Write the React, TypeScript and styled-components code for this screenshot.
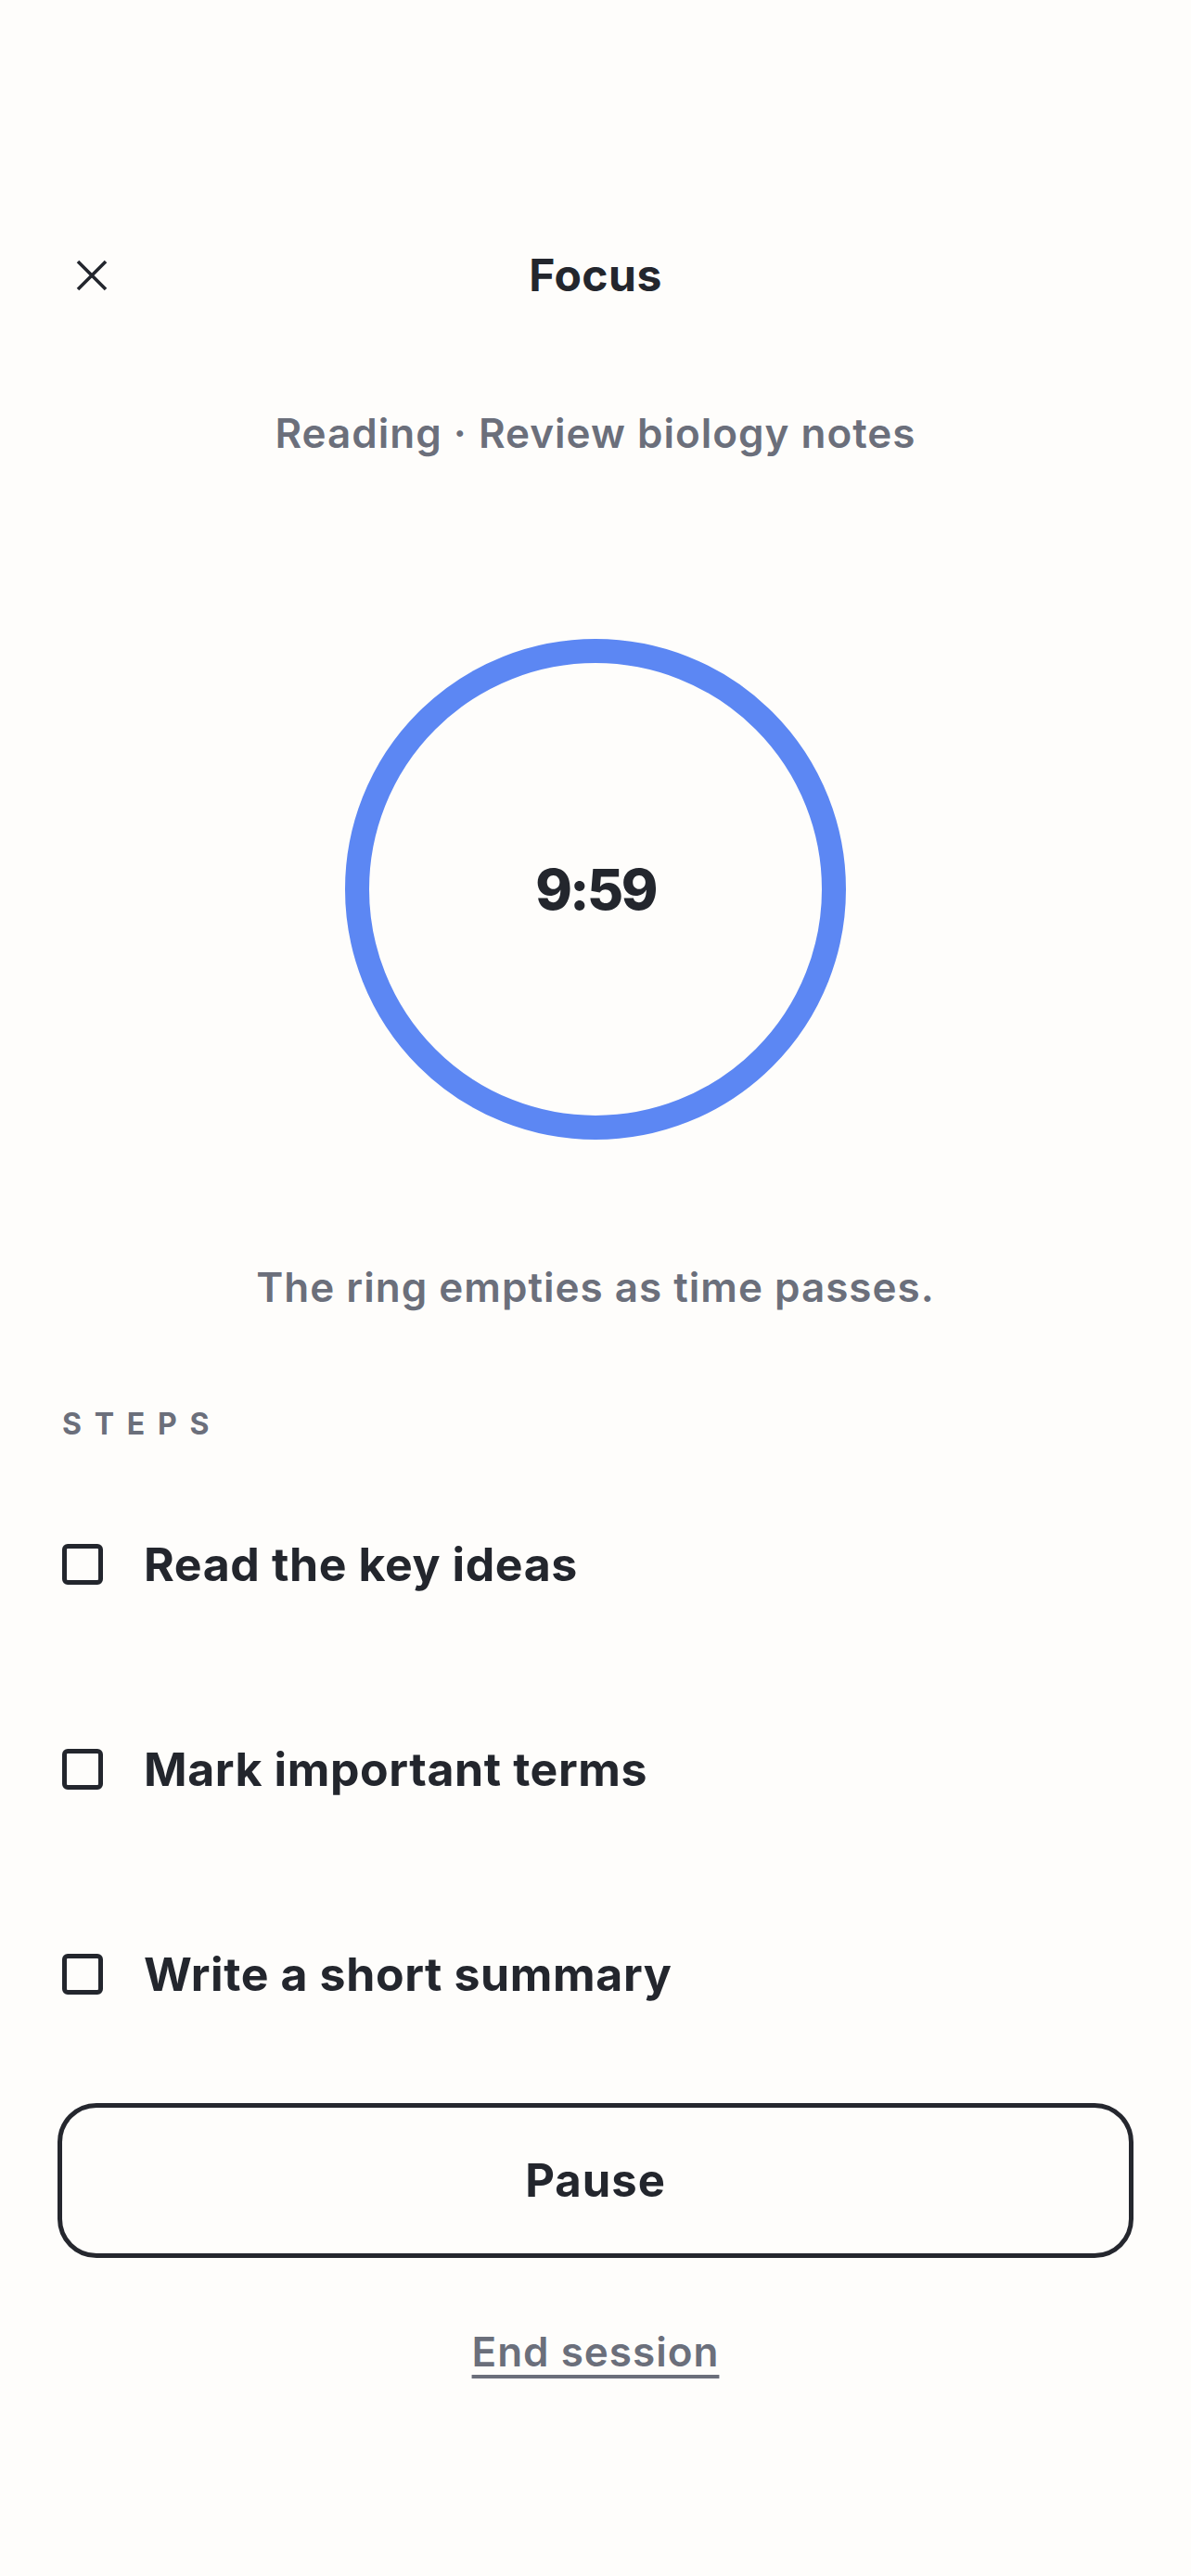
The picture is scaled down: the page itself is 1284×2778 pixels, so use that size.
import { useState } from "react";
import styled, { createGlobalStyle } from "styled-components";

const GlobalStyle = createGlobalStyle`
  html, body {
    margin: 0;
    padding: 0;
    background: #fefdfb;
  }
  body {
    font-family: Inter, "Noto Sans", "Liberation Sans", sans-serif;
    color: #23262d;
    -webkit-font-smoothing: antialiased;
  }
`;

const Screen = styled.div`
  min-height: 2778px;
  box-sizing: border-box;
  padding: 257px 62px 0;
  display: flex;
  flex-direction: column;
`;

const Header = styled.header`
  height: 80px;
  display: grid;
  grid-template-columns: 1fr auto 1fr;
  align-items: center;
`;

const CloseButton = styled.button`
  justify-self: start;
  width: 74px;
  height: 74px;
  padding: 0;
  border: none;
  background: none;
  display: flex;
  align-items: center;
  justify-content: center;
  color: #23262d;
  cursor: pointer;
`;

const Title = styled.h1`
  margin: 0;
  font-size: 48px;
  font-weight: 700;
  letter-spacing: 0.5px;
  line-height: 80px;
`;

const Muted = styled.p<{ $gap: number }>`
  margin: ${(p) => p.$gap}px 0 0;
  text-align: center;
  font-size: 44px;
  font-weight: 600;
  letter-spacing: 1px;
  line-height: 56px;
  color: #6b6f7b;
`;

const RingWrap = styled.div`
  margin: 194px auto 0;
  width: 540px;
  height: 540px;
  position: relative;
  display: flex;
  align-items: center;
  justify-content: center;
`;

const RingSvg = styled.svg`
  position: absolute;
  inset: 0;
  transform: rotate(-90deg);
`;

const Time = styled.span`
  position: relative;
  font-size: 60px;
  font-weight: 800;
  letter-spacing: -2.5px;
  line-height: 1;
`;

const SectionLabel = styled.h2`
  margin: 100px 0 0;
  padding-left: 5px;
  font-size: 32px;
  font-weight: 700;
  line-height: 40px;
  letter-spacing: 0.43em;
  color: #6b6f7b;
`;

const StepList = styled.ul`
  list-style: none;
  margin: 20px 0 0;
  padding: 0 0 0 5px;
`;

const StepRow = styled.li`
  height: 221px;
  display: flex;
  align-items: center;
  gap: 44px;
  cursor: pointer;
`;

const Box = styled.span<{ $checked: boolean }>`
  width: 44px;
  height: 44px;
  box-sizing: border-box;
  border: 5px solid #23262d;
  border-radius: 6px;
  flex-shrink: 0;
  background: ${(p) => (p.$checked ? "#23262d" : "transparent")};
`;

const StepText = styled.span<{ $checked: boolean }>`
  font-size: 50px;
  font-weight: 700;
  letter-spacing: 0.6px;
  line-height: 60px;
  color: ${(p) => (p.$checked ? "#9a9ea8" : "#23262d")};
  text-decoration: ${(p) => (p.$checked ? "line-through" : "none")};
`;

const PauseButton = styled.button`
  margin-top: 29px;
  height: 167px;
  width: 100%;
  box-sizing: border-box;
  border: 5px solid #25272e;
  border-radius: 42px;
  background: transparent;
  font-family: inherit;
  font-size: 49px;
  font-weight: 700;
  letter-spacing: 1px;
  color: #23262d;
  cursor: pointer;
`;

const EndLink = styled.a`
  margin: 73px auto 0;
  font-size: 44px;
  font-weight: 600;
  letter-spacing: 1px;
  line-height: 56px;
  color: #6b6f7b;
  text-decoration: underline;
  text-decoration-thickness: 4px;
  text-underline-offset: 9px;
  cursor: pointer;
`;

const steps = ["Read the key ideas", "Mark important terms", "Write a short summary"];

const TOTAL = 600;

const App = () => {
  const [checked, setChecked] = useState<boolean[]>([false, false, false]);
  const [remaining] = useState(599);

  const r = 257;
  const circ = 2 * Math.PI * r;
  const progress = Math.min(1, Math.ceil((remaining / TOTAL) * 100) / 100);
  const mins = Math.floor(remaining / 60);
  const secs = String(remaining % 60).padStart(2, "0");

  const toggle = (i: number) => {
    setChecked((c) => c.map((v, j) => (j === i ? !v : v)));
  };

  return (
    <>
      <GlobalStyle />
      <Screen>
        <Header>
          <CloseButton aria-label="Close">
            <svg width="34" height="34" viewBox="0 0 34 34" fill="none">
              <path d="M2 2 L32 32 M32 2 L2 32" stroke="currentColor" strokeWidth="3.6" />
            </svg>
          </CloseButton>
          <Title>Focus</Title>
          <span />
        </Header>

        <Muted $gap={102}>Reading · Review biology notes</Muted>

        <RingWrap>
          <RingSvg width="540" height="540" viewBox="0 0 540 540">
            <circle
              cx="270"
              cy="270"
              r={r}
              fill="none"
              stroke="#5c87f3"
              strokeWidth="26"
              strokeDasharray={circ}
              strokeDashoffset={circ * (1 - progress)}
            />
          </RingSvg>
          <Time>
            {mins}:{secs}
          </Time>
        </RingWrap>

        <Muted $gap={131}>The ring empties as time passes.</Muted>

        <SectionLabel>STEPS</SectionLabel>
        <StepList>
          {steps.map((s, i) => (
            <StepRow key={s} onClick={() => toggle(i)}>
              <Box $checked={checked[i]} />
              <StepText $checked={checked[i]}>{s}</StepText>
            </StepRow>
          ))}
        </StepList>

        <PauseButton>Pause</PauseButton>
        <EndLink>End session</EndLink>
      </Screen>
    </>
  );
};

export default App;
